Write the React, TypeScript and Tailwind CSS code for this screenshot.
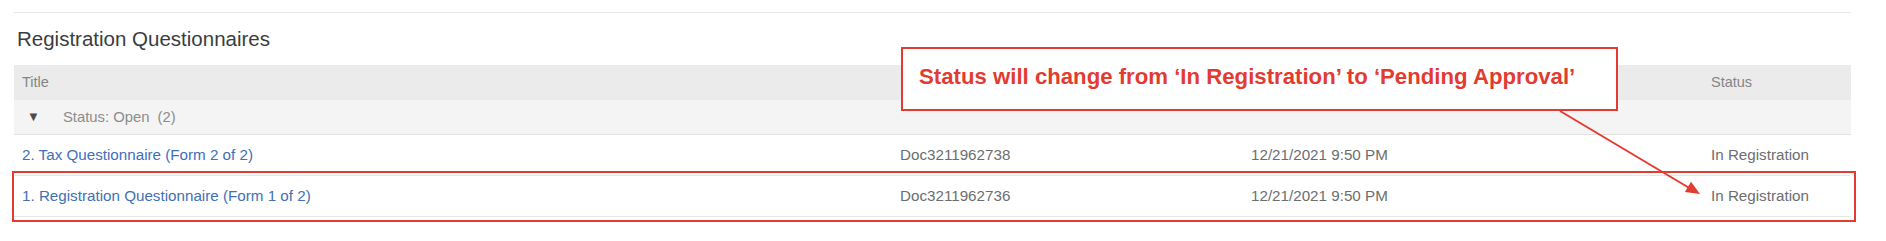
import React from "react";

type Row = {
  title: string;
  doc: string;
  date: string;
  status: string;
};

const rows: Row[] = [
  { title: "2. Tax Questionnaire (Form 2 of 2)", doc: "Doc3211962738", date: "12/21/2021 9:50 PM", status: "In Registration" },
  { title: "1. Registration Questionnaire (Form 1 of 2)", doc: "Doc3211962736", date: "12/21/2021 9:50 PM", status: "In Registration" },
];

const cols = "grid grid-cols-[878px_351px_460px_1fr]";

export default function App() {
  return (
    <div className="relative h-[241px] w-[1886px] overflow-hidden bg-white font-['Liberation_Sans',Arial,sans-serif]">
      <div className="ml-[14px] mt-[12px] w-[1837px] border-t border-[#e6e6e6]">
        {/* section heading */}
        <div className="flex h-[52px] items-center pl-[3px] text-[20.5px] text-[#3a3d40]">Registration Questionnaires</div>

        {/* column header */}
        <div className={`${cols} h-[35px] items-center bg-[#ebebeb] text-[14.5px] text-[#858585]`}>
          <div className="px-[8px]">Title</div>
          <div />
          <div />
          <div className="px-[8px]">Status</div>
        </div>

        {/* group row */}
        <div className="flex h-[35px] items-center border-b border-[#e2e2e2] bg-[#f4f4f4] text-[14.8px] text-[#8c8c8c]">
          <span className="ml-[13px] w-[36px] text-[13px] text-[#4a4a4a]">▼</span>
          <span className="whitespace-pre">Status: Open  (2)</span>
        </div>

        {rows.map((r) => (
          <div key={r.doc} className={`${cols} h-[41px] items-center border-b border-[#e6e6e6] text-[15.2px]`}>
            <div className="px-[8px] text-[#4170b5]">{r.title}</div>
            <div className="px-[8px] text-[#6b6e71]">{r.doc}</div>
            <div className="px-[8px] text-[#6b6e71]">{r.date}</div>
            <div className="px-[8px] text-[#6b6e71]">{r.status}</div>
          </div>
        ))}
      </div>

      {/* annotation: highlight of the first form */}
      <div className="absolute left-[12px] top-[171px] h-[51px] w-[1844px] border-2 border-[#e23b30]" />

      {/* annotation: callout */}
      <div className="absolute left-[901px] top-[47px] flex h-[64px] w-[717px] items-center border-2 border-[#e23b30] bg-white pb-[4px] pl-[16px] text-[22.2px] font-bold text-[#e23b30]">
        Status will change from ‘In Registration’ to ‘Pending Approval’
      </div>

      {/* annotation: arrow */}
      <svg className="pointer-events-none absolute left-0 top-0" width="1886" height="241">
        <line x1="1560" y1="111" x2="1691" y2="189" stroke="#e23b30" strokeWidth="2" />
        <polygon points="1700,194 1684.9,192 1691,181.7" fill="#e23b30" />
      </svg>
    </div>
  );
}
